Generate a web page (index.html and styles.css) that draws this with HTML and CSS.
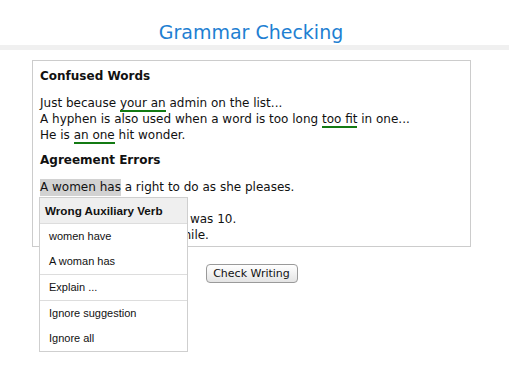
FILE: index.html
```html
<!DOCTYPE html>
<html lang="en">
<head>
    <meta charset="UTF-8">
    <title>Grammar Checking</title>
    <link rel="stylesheet" href="styles.css">
</head>
<body>

<div class="header">
    <h1>Grammar Checking</h1>
</div>

<div class="page">
    <div class="checker">
        <div class="editor">
            <h3>Confused Words</h3>
            <p>
                Just because <span class="err">your an</span> admin on the list...<br>
                A hyphen is also used when a word is too long <span class="err">too fit</span> in one...<br>
                He is <span class="err">an one</span> hit wonder.
            </p>
            <h3>Agreement Errors</h3>
            <p>
                <span class="selected">A women has</span> a right to do as she pleases.<br>
                They was late.<br>
                Moms lived there since I was 10.<br>
                He then gave one big smile.<br>
                It is so nice to see you here.
            </p>
        </div>

        <div class="menu">
            <div class="menu-title">Wrong Auxiliary Verb</div>
            <div class="menu-item">women have</div>
            <div class="menu-item">A woman has</div>
            <div class="menu-item sep">Explain ...</div>
            <div class="menu-item sep">Ignore suggestion</div>
            <div class="menu-item">Ignore all</div>
        </div>
    </div>

    <button class="btn">Check Writing</button>
</div>

</body>
</html>
```

FILE: styles.css
```css
body {
    margin: 0;
    padding: 0;
    min-height: 370px;
    background: #fff;
    font-family: "DejaVu Sans", Verdana, sans-serif;
    color: #111;
}
.header {
    height: 45px;
    padding-right: 7px;
    border-bottom: 5px solid #f0f0f0;
    text-align: center;
}
.header h1 {
    margin: 0;
    padding-top: 20px;
    font-size: 19px;
    line-height: 24px;
    font-weight: normal;
    color: #1e7fd2;
}
.page {
    width: 439px;
    min-height: 300px;
    margin: 10px 0 0 32px;
}
.checker {
    position: relative;
}
.editor {
    height: 171px;
    padding: 7px;
    border: 1px solid #cccccc;
    overflow: hidden;
    font-size: 12px;
    line-height: 16px;
}
.editor h3 {
    margin: 0 0 11px;
    font-size: 12px;
    line-height: 16px;
}
.editor p {
    margin: 0 0 9px;
}
.err {
    border-bottom: 2px solid #137a13;
}
.selected {
    background: #d2d2d2;
    padding: 1px 0 2px;
}
.menu {
    position: absolute;
    top: 137px;
    left: 7px;
    width: 147px;
    border: 1px solid #cfcfcf;
    background: #fff;
    font-family: "Liberation Sans", Arial, sans-serif;
    font-size: 11px;
    z-index: 2;
}
.menu-title {
    height: 25px;
    line-height: 25px;
    padding-left: 5px;
    background: #efefef;
    border-bottom: 1px solid #dddddd;
    font-weight: bold;
    font-size: 11.7px;
}
.menu-item {
    height: 25px;
    line-height: 25px;
    padding-left: 9px;
}
.menu-item.sep {
    border-top: 1px solid #dddddd;
}
.btn {
    display: block;
    width: 92px;
    height: 19px;
    margin: 17px auto 0;
    padding: 0;
    border: 1px solid #9a9a9a;
    border-radius: 4px;
    background: linear-gradient(#ffffff, #e4e4e4);
    font-family: "DejaVu Sans", sans-serif;
    font-size: 11px;
    color: #111;
}
```
